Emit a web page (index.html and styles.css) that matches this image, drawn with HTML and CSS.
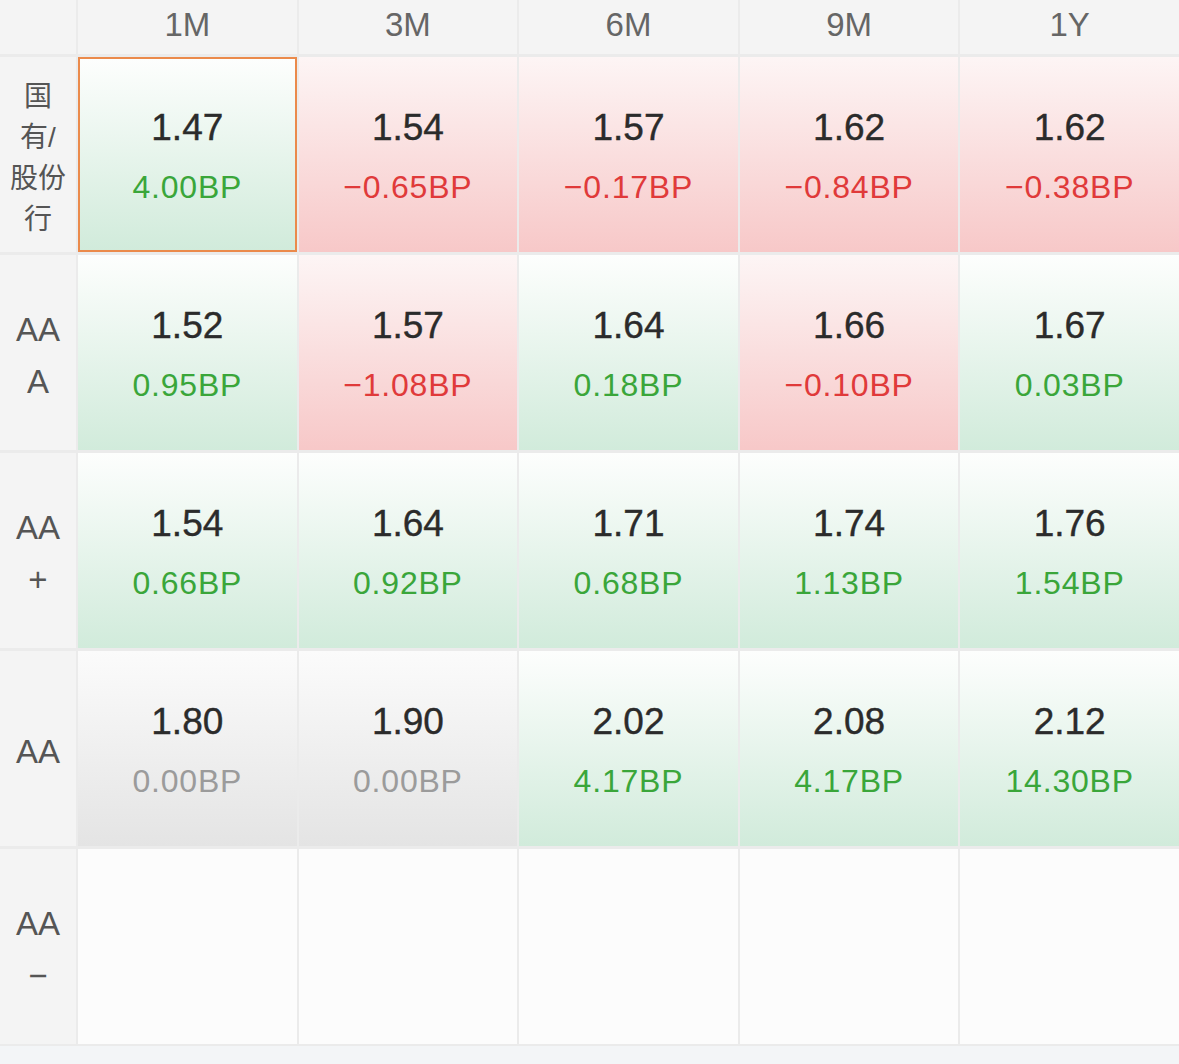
FILE: index.html
```html
<!DOCTYPE html>
<html lang="zh-CN">
<head>
<meta charset="utf-8">
<title>利率矩阵</title>
<link rel="stylesheet" href="styles.css">
</head>
<body>
<div class="matrix">
  <div class="head corner"></div>
  <div class="head">1M</div>
  <div class="head">3M</div>
  <div class="head">6M</div>
  <div class="head">9M</div>
  <div class="head">1Y</div>

  <div class="label label-cn">国<br>有/<br>股份<br>行</div>
  <div class="cell up selected"><span class="val">1.47</span><span class="bp">4.00BP</span></div>
  <div class="cell down"><span class="val">1.54</span><span class="bp">−0.65BP</span></div>
  <div class="cell down"><span class="val">1.57</span><span class="bp">−0.17BP</span></div>
  <div class="cell down"><span class="val">1.62</span><span class="bp">−0.84BP</span></div>
  <div class="cell down"><span class="val">1.62</span><span class="bp">−0.38BP</span></div>

  <div class="label">AA<br>A</div>
  <div class="cell up"><span class="val">1.52</span><span class="bp">0.95BP</span></div>
  <div class="cell down"><span class="val">1.57</span><span class="bp">−1.08BP</span></div>
  <div class="cell up"><span class="val">1.64</span><span class="bp">0.18BP</span></div>
  <div class="cell down"><span class="val">1.66</span><span class="bp">−0.10BP</span></div>
  <div class="cell up"><span class="val">1.67</span><span class="bp">0.03BP</span></div>

  <div class="label">AA<br>+</div>
  <div class="cell up"><span class="val">1.54</span><span class="bp">0.66BP</span></div>
  <div class="cell up"><span class="val">1.64</span><span class="bp">0.92BP</span></div>
  <div class="cell up"><span class="val">1.71</span><span class="bp">0.68BP</span></div>
  <div class="cell up"><span class="val">1.74</span><span class="bp">1.13BP</span></div>
  <div class="cell up"><span class="val">1.76</span><span class="bp">1.54BP</span></div>

  <div class="label">AA</div>
  <div class="cell flat"><span class="val">1.80</span><span class="bp">0.00BP</span></div>
  <div class="cell flat"><span class="val">1.90</span><span class="bp">0.00BP</span></div>
  <div class="cell up"><span class="val">2.02</span><span class="bp">4.17BP</span></div>
  <div class="cell up"><span class="val">2.08</span><span class="bp">4.17BP</span></div>
  <div class="cell up"><span class="val">2.12</span><span class="bp">14.30BP</span></div>

  <div class="label">AA<br>−</div>
  <div class="cell empty"></div>
  <div class="cell empty"></div>
  <div class="cell empty"></div>
  <div class="cell empty"></div>
  <div class="cell empty"></div>
</div>
</body>
</html>
```

FILE: styles.css
```css
* { box-sizing: border-box; }

html, body {
  margin: 0;
  padding: 0;
  background: #f3f5f7;
  font-family: "Liberation Sans", "Noto Sans CJK SC", Arial, sans-serif;
}

.matrix {
  display: grid;
  grid-template-columns: 76px repeat(5, 1fr);
  grid-template-rows: 54px repeat(5, 195px);
  column-gap: 2px;
  row-gap: 3px;
  background: #ebebeb;
  border-bottom: 2px solid #ebebeb;
  width: 1179px;
}

.head {
  background: #f4f4f4;
  color: #666666;
  font-size: 33px;
  display: flex;
  align-items: center;
  justify-content: center;
  padding-bottom: 4px;
}

.label {
  background: #f4f4f4;
  color: #555555;
  font-size: 33px;
  line-height: 52px;
  display: flex;
  align-items: center;
  justify-content: center;
  text-align: center;
  padding-top: 6px;
}

.label-cn {
  font-size: 28px;
  line-height: 41px;
  padding-top: 6px;
}

.cell {
  display: flex;
  flex-direction: column;
  align-items: center;
  justify-content: center;
  padding-top: 4px;
}

.cell.up { background: linear-gradient(to bottom, #fdfefd 0%, #d1ebdb 100%); }
.cell.down { background: linear-gradient(to bottom, #fdf5f5 0%, #f7c8c8 100%); }
.cell.flat { background: linear-gradient(to bottom, #fbfbfb 0%, #e4e4e4 100%); }
.cell.empty { background: #fcfcfc; }

.cell.selected { border: 2px solid #eb8a4b; }

.val {
  font-size: 37px;
  font-weight: 500;
  color: #2b2b2b;
  line-height: 44px;
  -webkit-text-stroke: 0.4px #2b2b2b;
}

.bp {
  font-size: 32px;
  line-height: 40px;
  margin-top: 17px;
  letter-spacing: 0.8px;
}

.up .bp { color: #3aa63a; }
.down .bp { color: #e03a3a; }
.flat .bp { color: #9b9b9b; }
```
